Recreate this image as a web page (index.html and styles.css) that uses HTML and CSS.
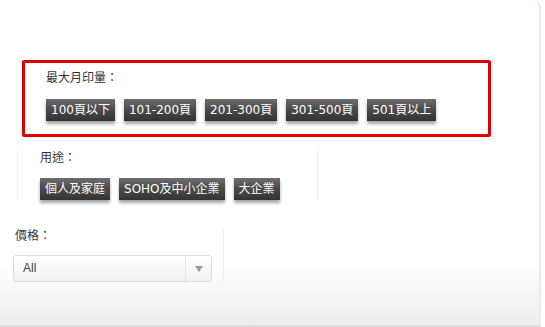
FILE: index.html
```html
<!DOCTYPE html>
<html lang="zh-Hant">
<head>
  <meta charset="UTF-8" />
  <title>印表機篩選</title>
  <link rel="stylesheet" href="styles.css">
</head>
<body>
  <div class="panel">
    <!-- 最大月印量 -->
    <div class="filter filter-volume is-marked">
      <div class="filter-label">最大月印量：</div>
      <div class="tags">
        <span class="tag">100頁以下</span>
        <span class="tag">101-200頁</span>
        <span class="tag">201-300頁</span>
        <span class="tag">301-500頁</span>
        <span class="tag">501頁以上</span>
      </div>
    </div>

    <!-- 用途 -->
    <div class="filter filter-usage">
      <div class="filter-label">用途：</div>
      <div class="tags">
        <span class="tag">個人及家庭</span>
        <span class="tag">SOHO及中小企業</span>
        <span class="tag">大企業</span>
      </div>
    </div>

    <!-- 價格 -->
    <div class="filter filter-price">
      <div class="filter-label">價格：</div>
      <div class="select">
        <span class="select-value">All</span>
        <span class="select-arrow"></span>
      </div>
    </div>
  </div>
</body>
</html>
```

FILE: styles.css
```css
body {
  margin: 0;
  padding: 0;
  background-color: #fff;
  font-family: 'Liberation Sans', 'Noto Sans CJK TC', sans-serif;
  color: #333;
}

.panel {
  box-sizing: border-box;
  width: 541px;
  height: 327px;
  padding-top: 60px;
  background: linear-gradient(to bottom, #fff 0, #fff 82%, #ececec 100%);
  border-right: 2px solid #eaeaea;
  border-bottom: 2px solid #dcdcdc;
  border-top-right-radius: 8px;
}

.filter-label {
  font-size: 12px;
  line-height: 16px;
  color: #333;
}

.tags {
  display: flex;
  gap: 9px;
  margin-top: 13px;
}

.tag {
  display: inline-block;
  height: 22px;
  line-height: 22px;
  padding: 0 5px;
  font-family: 'DejaVu Sans', 'Noto Sans CJK TC', sans-serif;
  font-size: 12px;
  color: #fff;
  background: linear-gradient(to bottom, #6e6e6e 0, #4c4c4c 45%, #333 100%);
  box-shadow: 0 3px 3px rgba(0, 0, 0, 0.35);
  white-space: nowrap;
}

/* highlighted group */
.filter-volume {
  box-sizing: border-box;
  width: 469px;
  height: 77px;
  margin-left: 22px;
  padding: 7px 0 0 21px;
  border: 3px solid #e00000;
  border-radius: 2px;
}

.filter-usage {
  box-sizing: border-box;
  width: 301px;
  height: 50px;
  margin: 13px 0 0 17px;
  padding-left: 22px;
  border-left: 1px solid #eee;
  border-right: 1px solid #eee;
}

.filter-usage .tags {
  margin-top: 12px;
}

.filter-price {
  box-sizing: border-box;
  width: 224px;
  height: 54px;
  margin-top: 28px;
  padding-left: 13px;
  border-right: 1px solid #eee;
}

.filter-price .filter-label {
  padding-left: 2px;
}

.select {
  box-sizing: border-box;
  display: flex;
  width: 199px;
  height: 27px;
  margin-top: 11px;
  border: 1px solid #ddd;
  border-radius: 3px;
  background: linear-gradient(to bottom, #fff 0, #f1f1f1 100%);
}

.select-value {
  flex: 1;
  padding-left: 9px;
  font-size: 12px;
  line-height: 25px;
  color: #444;
}

.select-arrow {
  position: relative;
  width: 25px;
  border-left: 1px solid #e2e2e2;
}

.select-arrow::after {
  content: '';
  position: absolute;
  left: 9px;
  top: 10px;
  border-left: 4px solid transparent;
  border-right: 4px solid transparent;
  border-top: 6px solid #999;
}
```
